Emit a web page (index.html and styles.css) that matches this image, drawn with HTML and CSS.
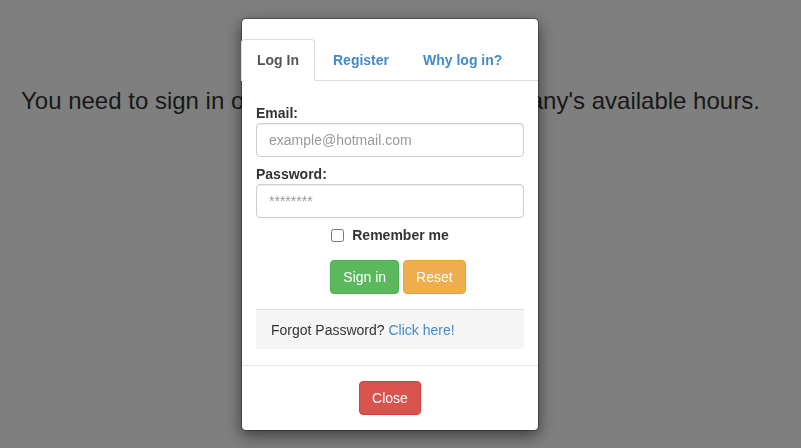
FILE: index.html
```html
<!DOCTYPE html>
<html>
<head>
<meta charset="utf-8">
<link rel="stylesheet" href="styles.css">
</head>
<body>
<div class="page">
  <h3 class="lead-text">You need to sign in or register to see your company's available hours.</h3>
</div>
<div class="backdrop"></div>
<div class="modal">
  <ul class="tabs">
    <li class="tab active"><a>Log In</a></li>
    <li class="tab"><a>Register</a></li>
    <li class="tab"><a>Why log in?</a></li>
  </ul>
  <div class="modal-body">
    <label class="field-label">Email:</label>
    <input class="input" type="text" placeholder="example@hotmail.com">
    <label class="field-label pw">Password:</label>
    <input class="input" type="password" placeholder="********">
    <div class="remember">
      <input type="checkbox" class="check"><span>Remember me</span>
    </div>
    <div class="actions">
      <button class="btn btn-success">Sign in</button>
      <button class="btn btn-warning">Reset</button>
    </div>
    <div class="forgot">Forgot Password? <a class="link">Click here!</a></div>
  </div>
  <div class="modal-footer">
    <button class="btn btn-danger">Close</button>
  </div>
</div>
</body>
</html>
```
FILE: styles.css
```css
html, body {
  margin: 0;
  padding: 0;
}
body {
  background: #ffffff;
  font-family: "Liberation Sans", Arial, sans-serif;
  font-size: 14px;
  color: #333;
  width: 801px;
  height: 448px;
  overflow: hidden;
}
.page {
  padding: 88px 21px 0 21px;
}
.lead-text {
  margin: 0;
  font-size: 24px;
  font-weight: normal;
  line-height: 26px;
  white-space: nowrap;
  color: #333;
}
.backdrop {
  position: fixed;
  inset: 0;
  background: rgba(0, 0, 0, 0.5);
}
.modal {
  position: absolute;
  left: 241px;
  top: 18px;
  width: 296px;
  background: #fff;
  border: 1px solid rgba(0, 0, 0, 0.3);
  border-radius: 5px;
  box-shadow: 0 5px 15px rgba(0, 0, 0, 0.5);
  background-clip: padding-box;
}
.tabs {
  list-style: none;
  margin: 0 0 0 -1px;
  padding: 20px 0 0 0;
  display: flex;
  border-bottom: 1px solid #ddd;
}
.tab {
  margin-right: 2px;
  margin-bottom: -1px;
}
.tab a {
  display: block;
  padding: 10px 15px;
  line-height: 20px;
  font-weight: bold;
  color: #428bca;
  border: 1px solid transparent;
  border-radius: 4px 4px 0 0;
}
.tab.active a {
  color: #555;
  background: #fff;
  border-color: #ddd #ddd transparent #ddd;
}
.modal-body {
  padding: 22px 14px 16px 14px;
}
.field-label {
  display: block;
  font-weight: bold;
  line-height: 20px;
  color: #333;
}
.field-label.pw {
  margin-top: 7px;
}
.input {
  display: block;
  box-sizing: border-box;
  width: 268px;
  height: 34px;
  padding: 6px 12px;
  font-family: "Liberation Sans", Arial, sans-serif;
  font-size: 14px;
  color: #555;
  border: 1px solid #ccc;
  border-radius: 4px;
  box-shadow: inset 0 1px 1px rgba(0, 0, 0, 0.075);
  margin: 0;
}
.input::placeholder {
  color: #999;
}
.remember {
  display: flex;
  align-items: center;
  justify-content: center;
  margin-top: 7px;
  height: 20px;
  font-weight: bold;
}
.check {
  width: 13px;
  height: 13px;
  margin: 0 8px 0 0;
}
.actions {
  display: flex;
  justify-content: center;
  gap: 4px;
  margin-top: 15px;
  padding-left: 16px;
}
.btn {
  font-family: "Liberation Sans", Arial, sans-serif;
  font-size: 14px;
  line-height: 20px;
  padding: 6px 12px;
  border: 1px solid transparent;
  border-radius: 4px;
  color: #fff;
  margin: 0;
}
.btn-success {
  background: #5cb85c;
  border-color: #4cae4c;
}
.btn-warning {
  background: #f0ad4e;
  border-color: #eea236;
}
.btn-danger {
  background: #d9534f;
  border-color: #d43f3a;
}
.forgot {
  margin-top: 15px;
  background: #f5f5f5;
  border-top: 1px solid #ddd;
  border-radius: 0 0 3px 3px;
  padding: 10px 15px 9px 15px;
  line-height: 20px;
  color: #333;
}
.link {
  color: #428bca;
}
.modal-footer {
  border-top: 1px solid #e5e5e5;
  padding: 15px;
  display: flex;
  justify-content: center;
}
```
